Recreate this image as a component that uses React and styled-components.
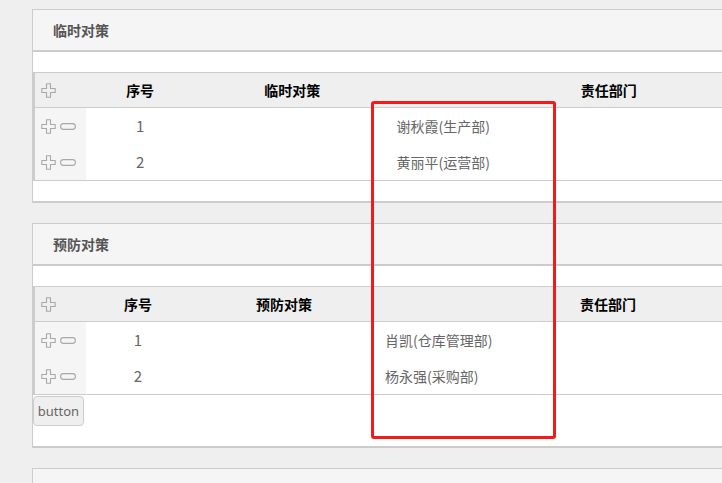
import styled, { createGlobalStyle } from "styled-components";

const GlobalStyle = createGlobalStyle`
  html, body {
    margin: 0;
    padding: 0;
    background: #efefef;
    overflow: hidden;
    font-family: "Noto Sans CJK SC", "Noto Sans", "Liberation Sans", sans-serif;
    font-size: 14px;
  }
`;

const tables = [
  {
    title: "临时对策",
    column: "临时对策",
    widths: [52, 108, 196, 436],
    namePad: 6,
    rows: ["谢秋霞(生产部)", "黄丽平(运营部)"],
  },
  {
    title: "预防对策",
    column: "预防对策",
    widths: [52, 104, 188, 460],
    namePad: 7,
    rows: ["肖凯(仓库管理部)", "杨永强(采购部)"],
    button: true,
  },
];

const PlusIcon = () => (
  <svg width="15" height="15" viewBox="0 0 15 15">
    <path
      d="M5.5 0.8h4v4.7h4.7v4h-4.7v4.7h-4v-4.7H0.8v-4h4.7z"
      fill="none"
      stroke="#a8a8a8"
      strokeWidth="1.1"
      strokeLinejoin="round"
    />
  </svg>
);

const MinusIcon = () => (
  <svg width="16" height="7" viewBox="0 0 16 7">
    <rect x="0.6" y="0.6" width="14.8" height="5.8" rx="2.9" fill="none" stroke="#a8a8a8" strokeWidth="1.1" />
  </svg>
);

const App = () => {
  return (
    <Page>
      <GlobalStyle />
      {tables.map((t) => (
        <Panel key={t.title}>
          <PanelHead>{t.title}</PanelHead>
          <PanelBody>
            <Grid>
              <colgroup>
                {t.widths.map((w, i) => (
                  <col key={i} style={{ width: w }} />
                ))}
              </colgroup>
              <thead>
                <tr>
                  <HeadCell $ops>
                    <PlusIcon />
                  </HeadCell>
                  <HeadCell>序号</HeadCell>
                  <HeadCell>{t.column}</HeadCell>
                  <HeadCell>责任部门</HeadCell>
                </tr>
              </thead>
              <tbody>
                {t.rows.map((name, i) => (
                  <tr key={name}>
                    <OpsCell>
                      <Ops>
                        <PlusIcon />
                        <MinusIcon />
                      </Ops>
                    </OpsCell>
                    <NumCell>{i + 1}</NumCell>
                    <Cell />
                    <NameCell $pad={t.namePad}>{name}</NameCell>
                  </tr>
                ))}
              </tbody>
            </Grid>
            {t.button && <Button>button</Button>}
          </PanelBody>
        </Panel>
      ))}
      <Panel>
        <PanelHead>是否需要启动纠正措施</PanelHead>
        <PanelBody />
      </Panel>
      <Mark />
    </Page>
  );
};

const Page = styled.div`
  position: relative;
  padding: 9px 0 0 32px;
  display: flex;
  flex-direction: column;
  gap: 20px;
  height: 483px;
  box-sizing: border-box;
`;

const Panel = styled.section`
  width: 900px;
  flex-shrink: 0;
  border: 1px solid #cccccc;
  border-bottom-width: 2px;
  background: #ffffff;
`;

const PanelHead = styled.div`
  height: 40px;
  display: flex;
  align-items: center;
  padding: 0 0 1px 20px;
  box-sizing: border-box;
  height: 42px;
  background: #f5f5f5;
  border-bottom: 2px solid #cccccc;
  color: #555555;
  font-weight: bold;
  font-size: 14px;
`;

const PanelBody = styled.div`
  padding: 20px 0;
  background: #ffffff;
`;

const Grid = styled.table`
  border-collapse: collapse;
  table-layout: fixed;
  width: 794px;
  border-left: 2px solid #cccccc;
  border-top: 1px solid #cccccc;
  border-bottom: 1px solid #cccccc;
`;

const HeadCell = styled.th`
  height: 34px;
  padding: 0;
  background: #efefef;
  border-bottom: 1px solid #cccccc;
  color: #000000;
  font-weight: bold;
  font-size: 14px;
  text-align: ${(p) => (p.$ops ? "left" : "center")};
  padding-left: ${(p) => (p.$ops ? "6px" : "0")};
  line-height: 0;
  svg {
    vertical-align: middle;
  }
`;

const Cell = styled.td`
  height: 36px;
  padding: 0;
  line-height: 20px;
`;

const OpsCell = styled(Cell)`
  background: #f5f5f5;
  padding-left: 6px;
`;

const Ops = styled.div`
  display: flex;
  align-items: center;
  gap: 4px;
`;

const NumCell = styled(Cell)`
  text-align: center;
  color: #666666;
  font-size: 15px;
`;

const NameCell = styled(Cell)`
  color: #666666;
  padding-left: ${(p) => p.$pad}px;
  font-size: 14px;
`;

const Button = styled.button`
  display: block;
  margin: 1px 0 0 0;
  height: 30px;
  width: 51px;
  padding: 0;
  border: 1px solid #cccccc;
  border-radius: 4px;
  background: #efefef;
  color: #666666;
  font-family: "Noto Sans", "Liberation Sans", sans-serif;
  font-size: 13px;
`;

const Mark = styled.div`
  position: absolute;
  left: 371px;
  top: 101px;
  width: 185px;
  height: 338px;
  box-sizing: border-box;
  border: 3px solid #f41a1a;
  border-radius: 3px;
  pointer-events: none;
`;

export default App;
